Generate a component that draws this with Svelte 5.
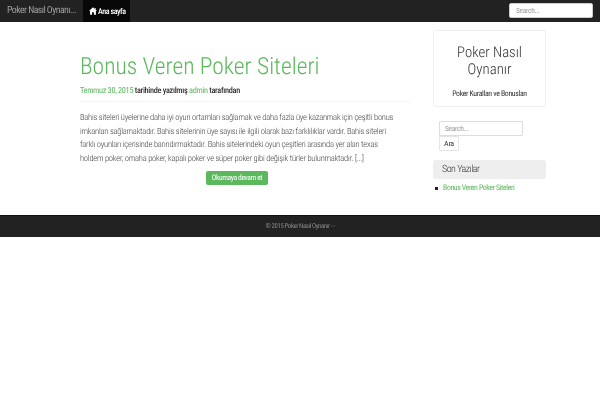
<script>
 const lines = [
     "Bahis siteleri üyelerine daha iyi oyun ortamları sağlamak ve daha fazla üye kazanmak için çeşitli bonus",
     "imkanları sağlamaktadır. Bahis sitelerinin üye sayısı ile ilgili olarak bazı farklılıklar vardır. Bahis siteleri",
     "farklı oyunları içerisinde barındırmaktadır. Bahis sitelerindeki oyun çeşitleri arasında yer alan texas",
     "holdem poker, omaha poker, kapalı poker ve süper poker gibi değişik türler bulunmaktadır. [...]",
 ];
</script>

<div class="root">
    <nav class="navbar">
        <a class="brand" href="#top">Poker Nasıl Oynanı...</a>
        <a class="home" href="#top">
            <svg viewBox="0 0 12 11" width="8" height="8" aria-hidden="true">
                <path d="M6 0 L8.6 2.4 L8.6 1 L10 1 L10 3.7 L12 5.6 L10.4 5.6 L10.4 11 L7.4 11 L7.4 7.4 L4.6 7.4 L4.6 11 L1.6 11 L1.6 5.6 L0 5.6 Z" fill="#fff"/>
            </svg>
            <span>Ana sayfa</span>
        </a>
        <input class="nav-search" placeholder="Search..." />
    </nav>

    <div class="page">
        <main>
            <h1><a href="#top">Bonus Veren Poker Siteleri</a></h1>
            <p class="meta"><a href="#top">Temmuz 30, 2015</a> tarihinde yazılmış <a href="#top">admin</a> tarafından</p>
            <hr />
            <div class="excerpt">
                {#each lines as line}
                    <div>{line}</div>
                {/each}
            </div>
            <div class="more"><a href="#top">Okumaya devam et</a></div>
        </main>
        <aside>
            <div class="site-box">
                <h2>Poker Nasıl<br />Oynanır</h2>
                <p>Poker Kuralları ve Bonusları</p>
            </div>
            <form class="side-search">
                <input placeholder="Search..." />
                <button type="button">Ara</button>
            </form>
            <h3>Son Yazılar</h3>
            <ul>
                <li><a href="#top">Bonus Veren Poker Siteleri</a></li>
            </ul>
        </aside>
    </div>

    <footer>© 2015 Poker Nasıl Oynanır - -</footer>
</div>

<style>
 :global(body) {
     background: #fff;
     font-family: "Roboto Condensed", "Roboto", "Liberation Sans", sans-serif;
     color: #333;
     text-rendering: geometricPrecision;
 }
 .root {
     will-change: transform;
 }
 a {
     color: #5cb85c;
     text-decoration: none;
 }
 .navbar {
     display: flex;
     align-items: stretch;
     height: 22px;
     background: #222;
 }
 .brand {
     width: 83px;
     flex-shrink: 0;
     padding-left: 7px;
     box-sizing: border-box;
     line-height: 21px;
     font-size: 9.8px;
     letter-spacing: -.55px;
     color: #9d9d9d;
     white-space: nowrap;
 }
 .home {
     display: flex;
     align-items: center;
     gap: 1px;
     width: 47px;
     flex-shrink: 0;
     padding-left: 6px;
     box-sizing: border-box;
     background: #080808;
     color: #fff;
     font-weight: 500;
     font-size: 8px;
     letter-spacing: -.43px;
     white-space: nowrap;
 }
 .home svg {
     flex-shrink: 0;
 }
 .nav-search {
     margin: 3px 7px 0 auto;
     width: 84px;
     height: 15px;
     box-sizing: border-box;
     border: 1px solid #ccc;
     border-radius: 2px;
     padding: 0 6px;
     font: 7.5px "Roboto Condensed", "Roboto", sans-serif;
     letter-spacing: -.3px;
     background: #fff;
 }
 input::placeholder {
     color: #999;
 }
 .page {
     display: flex;
     height: 193px;
 }
 main {
     width: 330px;
     margin-left: 80px;
 }
 h1 {
     margin: 28px 0 0;
     font-size: 23.5px;
     line-height: 32px;
     font-weight: 300;
     white-space: nowrap;
 }
 .meta {
     margin: 3px 0 0;
     font-size: 8.3px;
     letter-spacing: -.32px;
     line-height: 13px;
     font-weight: 500;
     color: #333;
     white-space: nowrap;
 }
 .meta a {
     font-weight: 400;
 }
 hr {
     margin: 3px 0 0;
     border: 0;
     border-top: 1px solid #f4f4f4;
 }
 .excerpt {
     margin-top: 10px;
     font-size: 8.5px;
     letter-spacing: -.22px;
     line-height: 13.6px;
     font-weight: 300;
     color: #444;
     white-space: nowrap;
 }
 .more {
     display: flex;
     justify-content: center;
     width: 314px;
     margin-top: 5px;
 }
 .more a {
     display: block;
     width: 62px;
     height: 14px;
     line-height: 14px;
     text-align: center;
     background: #5cb85c;
     border-radius: 2px;
     color: #fff;
     font-size: 7.6px;
     letter-spacing: -.4px;
     white-space: nowrap;
 }
 aside {
     width: 113px;
     margin-left: 23px;
 }
 .site-box {
     margin-top: 8px;
     height: 77px;
     box-sizing: border-box;
     border: 1px solid #eee;
     border-radius: 3px;
     text-align: center;
     padding-top: 13px;
 }
 h2 {
     margin: 0;
     font-size: 14.8px;
     line-height: 17px;
     font-weight: 300;
     color: #333;
 }
 .site-box p {
     margin: 10px 0 0;
     font-size: 7.8px;
     letter-spacing: -.35px;
     line-height: 11px;
 }
 .side-search {
     margin: 14px 0 0 6px;
 }
 .side-search input {
     display: block;
     width: 84px;
     height: 15px;
     box-sizing: border-box;
     border: 1px solid #ddd;
     border-radius: 1px;
     padding: 0 5px;
     font: 7.5px "Roboto Condensed", "Roboto", sans-serif;
     letter-spacing: -.3px;
 }
 .side-search button {
     display: block;
     width: 20px;
     height: 15px;
     padding: 0;
     background: #fff;
     border: 1px solid #e5e5e5;
     border-radius: 1px;
     font: 8px "Roboto Condensed", "Roboto", sans-serif;
     letter-spacing: -.3px;
     color: #333;
 }
 h3 {
     margin: 9px 0 0;
     height: 19px;
     line-height: 19px;
     padding-left: 9px;
     background: #eee;
     border-radius: 3px;
     font-size: 10px;
     letter-spacing: -.5px;
     font-weight: 300;
     color: #333;
 }
 ul {
     margin: 3px 0 0;
     padding: 0 0 0 10px;
     list-style: none;
 }
 li {
     position: relative;
     font-size: 7.8px;
     letter-spacing: -.38px;
     line-height: 12px;
     white-space: nowrap;
 }
 li::before {
     content: "";
     position: absolute;
     left: -8px;
     top: 5px;
     width: 3px;
     height: 3px;
     background: #222;
 }
 footer {
     height: 21px;
     line-height: 21px;
     background: #222;
     border-top: 1px solid #111;
     text-align: center;
     font-size: 6.8px;
     letter-spacing: -.4px;
     color: #888;
 }
</style>
